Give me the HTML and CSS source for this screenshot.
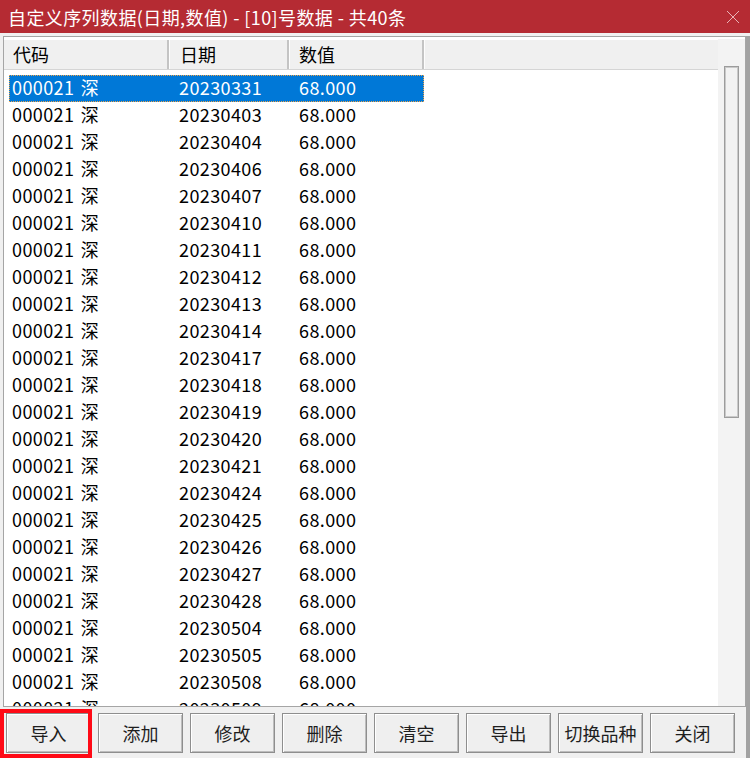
FILE: index.html
```html
<!DOCTYPE html>
<html>
<head>
    <meta charset="utf-8">
    <title>自定义序列数据</title>
    <link rel="stylesheet" href="styles.css">
</head>
<body>
    <!-- 标题栏 -->
    <div class="titlebar">
        <span class="title">自定义序列数据(日期,数值) - [10]号数据 - 共40条</span>
        <svg class="close" width="14" height="14" viewBox="0 0 14 14">
            <path d="M1 1L13 13M13 1L1 13" stroke="#e9b3b6" stroke-width="1" fill="none"/>
        </svg>
    </div>

    <div class="frame">
        <!-- 列表 -->
        <div class="list">
            <div class="table">
                <div class="thead">
                    <div class="th c1">代码</div>
                    <div class="th c2">日期</div>
                    <div class="th c3">数值</div>
                    <div class="th rest"></div>
                </div>
                <div class="tbody" id="rows"></div>
            </div>
            <div class="scroll">
                <div class="thumb"></div>
            </div>
        </div>

        <!-- 按钮 -->
        <div class="buttons">
            <button>导入</button>
            <button>添加</button>
            <button>修改</button>
            <button>删除</button>
            <button>清空</button>
            <button>导出</button>
            <button>切换品种</button>
            <button>关闭</button>
        </div>
    </div>

    <div class="mark"></div>

    <script>
        // 数据行
        const dates = ['20230331', '20230403', '20230404', '20230406', '20230407', '20230410',
            '20230411', '20230412', '20230413', '20230414', '20230417', '20230418',
            '20230419', '20230420', '20230421', '20230424', '20230425', '20230426',
            '20230427', '20230428', '20230504', '20230505', '20230508', '20230509'];

        document.getElementById('rows').innerHTML = dates.map((d, i) => `
            <div class="row${i === 0 ? ' selected' : ''}">
                <div class="td c1">000021 深</div>
                <div class="td c2">${d}</div>
                <div class="td c3">68.000</div>
            </div>
        `).join('');
    </script>
</body>
</html>
```

FILE: styles.css
```css
body {
    margin: 0;
    width: 750px;
    height: 758px;
    overflow: hidden;
    position: relative;
    background-color: #f0f0f0;
    font-family: "Noto Sans CJK SC", sans-serif;
    color: #000;
}
.titlebar {
    height: 33px;
    background-color: #b52b33;
    color: white;
    display: flex;
    justify-content: space-between;
    align-items: center;
    padding: 0 10px 0 8px;
    font-size: 18px;
    letter-spacing: 0.4px;
}
.titlebar .title {
    line-height: 32px;
}
.frame {
    width: 750px;
    height: 725px;
    box-sizing: border-box;
    border-right: 4px solid #a2a2a2;
}
.list {
    margin: 3px 0 0 3px;
    height: 671px;
    box-sizing: border-box;
    border: 1px solid #a5a5a5;
    padding-top: 3px;
    background-color: white;
    display: flex;
}
.table {
    flex: 1;
    overflow: hidden;
}
.thead {
    display: flex;
    height: 30px;
    box-sizing: border-box;
    background-color: #f0f0f0;
    border-bottom: 1px solid #d5d5d5;
    font-size: 18px;
}
.th {
    box-sizing: border-box;
    line-height: 29px;
    padding-left: 10px;
    border-left: 1px solid #fdfdfd;
    border-right: 2px solid #c4c4c4;
}
.th.c1 { width: 165px; padding-left: 9px; border-left: none; }
.th.c2 { width: 120px; }
.th.c3 { width: 135px; padding-left: 9px; }
.th.rest { flex: 1; border-right: none; }
.tbody {
    padding: 5px 0 0 5px;
    font-size: 18px;
}
.row {
    display: flex;
    width: 415px;
    height: 27px;
    line-height: 25px;
    box-sizing: border-box;
}
.row.selected {
    background-color: #0078d7;
    color: white;
    outline: 1px dotted #f0a448;
    outline-offset: -1px;
}
.td {
    box-sizing: border-box;
    padding-left: 3px;
    white-space: nowrap;
    letter-spacing: 0.4px;
}
.td.c1 { width: 167px; word-spacing: 2px; }
.td.c2 { width: 120px; }
.td.c3 { width: 128px; }
.scroll {
    width: 27px;
    margin-top: -1px;
    background-color: #f3f3f3;
    display: flex;
    flex-direction: column;
    align-items: center;
}
.thumb {
    margin-top: 27px;
    width: 15px;
    height: 352px;
    box-sizing: border-box;
    border: 1px solid #9c9c9c;
    box-shadow: inset 0 0 0 1px #c9c9c9;
    background-color: #f2f2f2;
}
.buttons {
    display: flex;
    gap: 7px;
    padding: 6px 0 0 6px;
}
.buttons button {
    width: 85px;
    height: 40px;
    padding: 0;
    font-family: "Noto Sans CJK SC", sans-serif;
    font-size: 18px;
    color: #1e1e1e;
    background-color: #efefef;
    border: 1px solid #8e8e8e;
    box-shadow: inset 1px 1px #ffffff, inset -1px -1px #bdbdbd;
    cursor: pointer;
}
.mark {
    position: absolute;
    left: 0;
    top: 709px;
    width: 92px;
    height: 49px;
    box-sizing: border-box;
    border: 4px solid #ff0a16;
}
```
